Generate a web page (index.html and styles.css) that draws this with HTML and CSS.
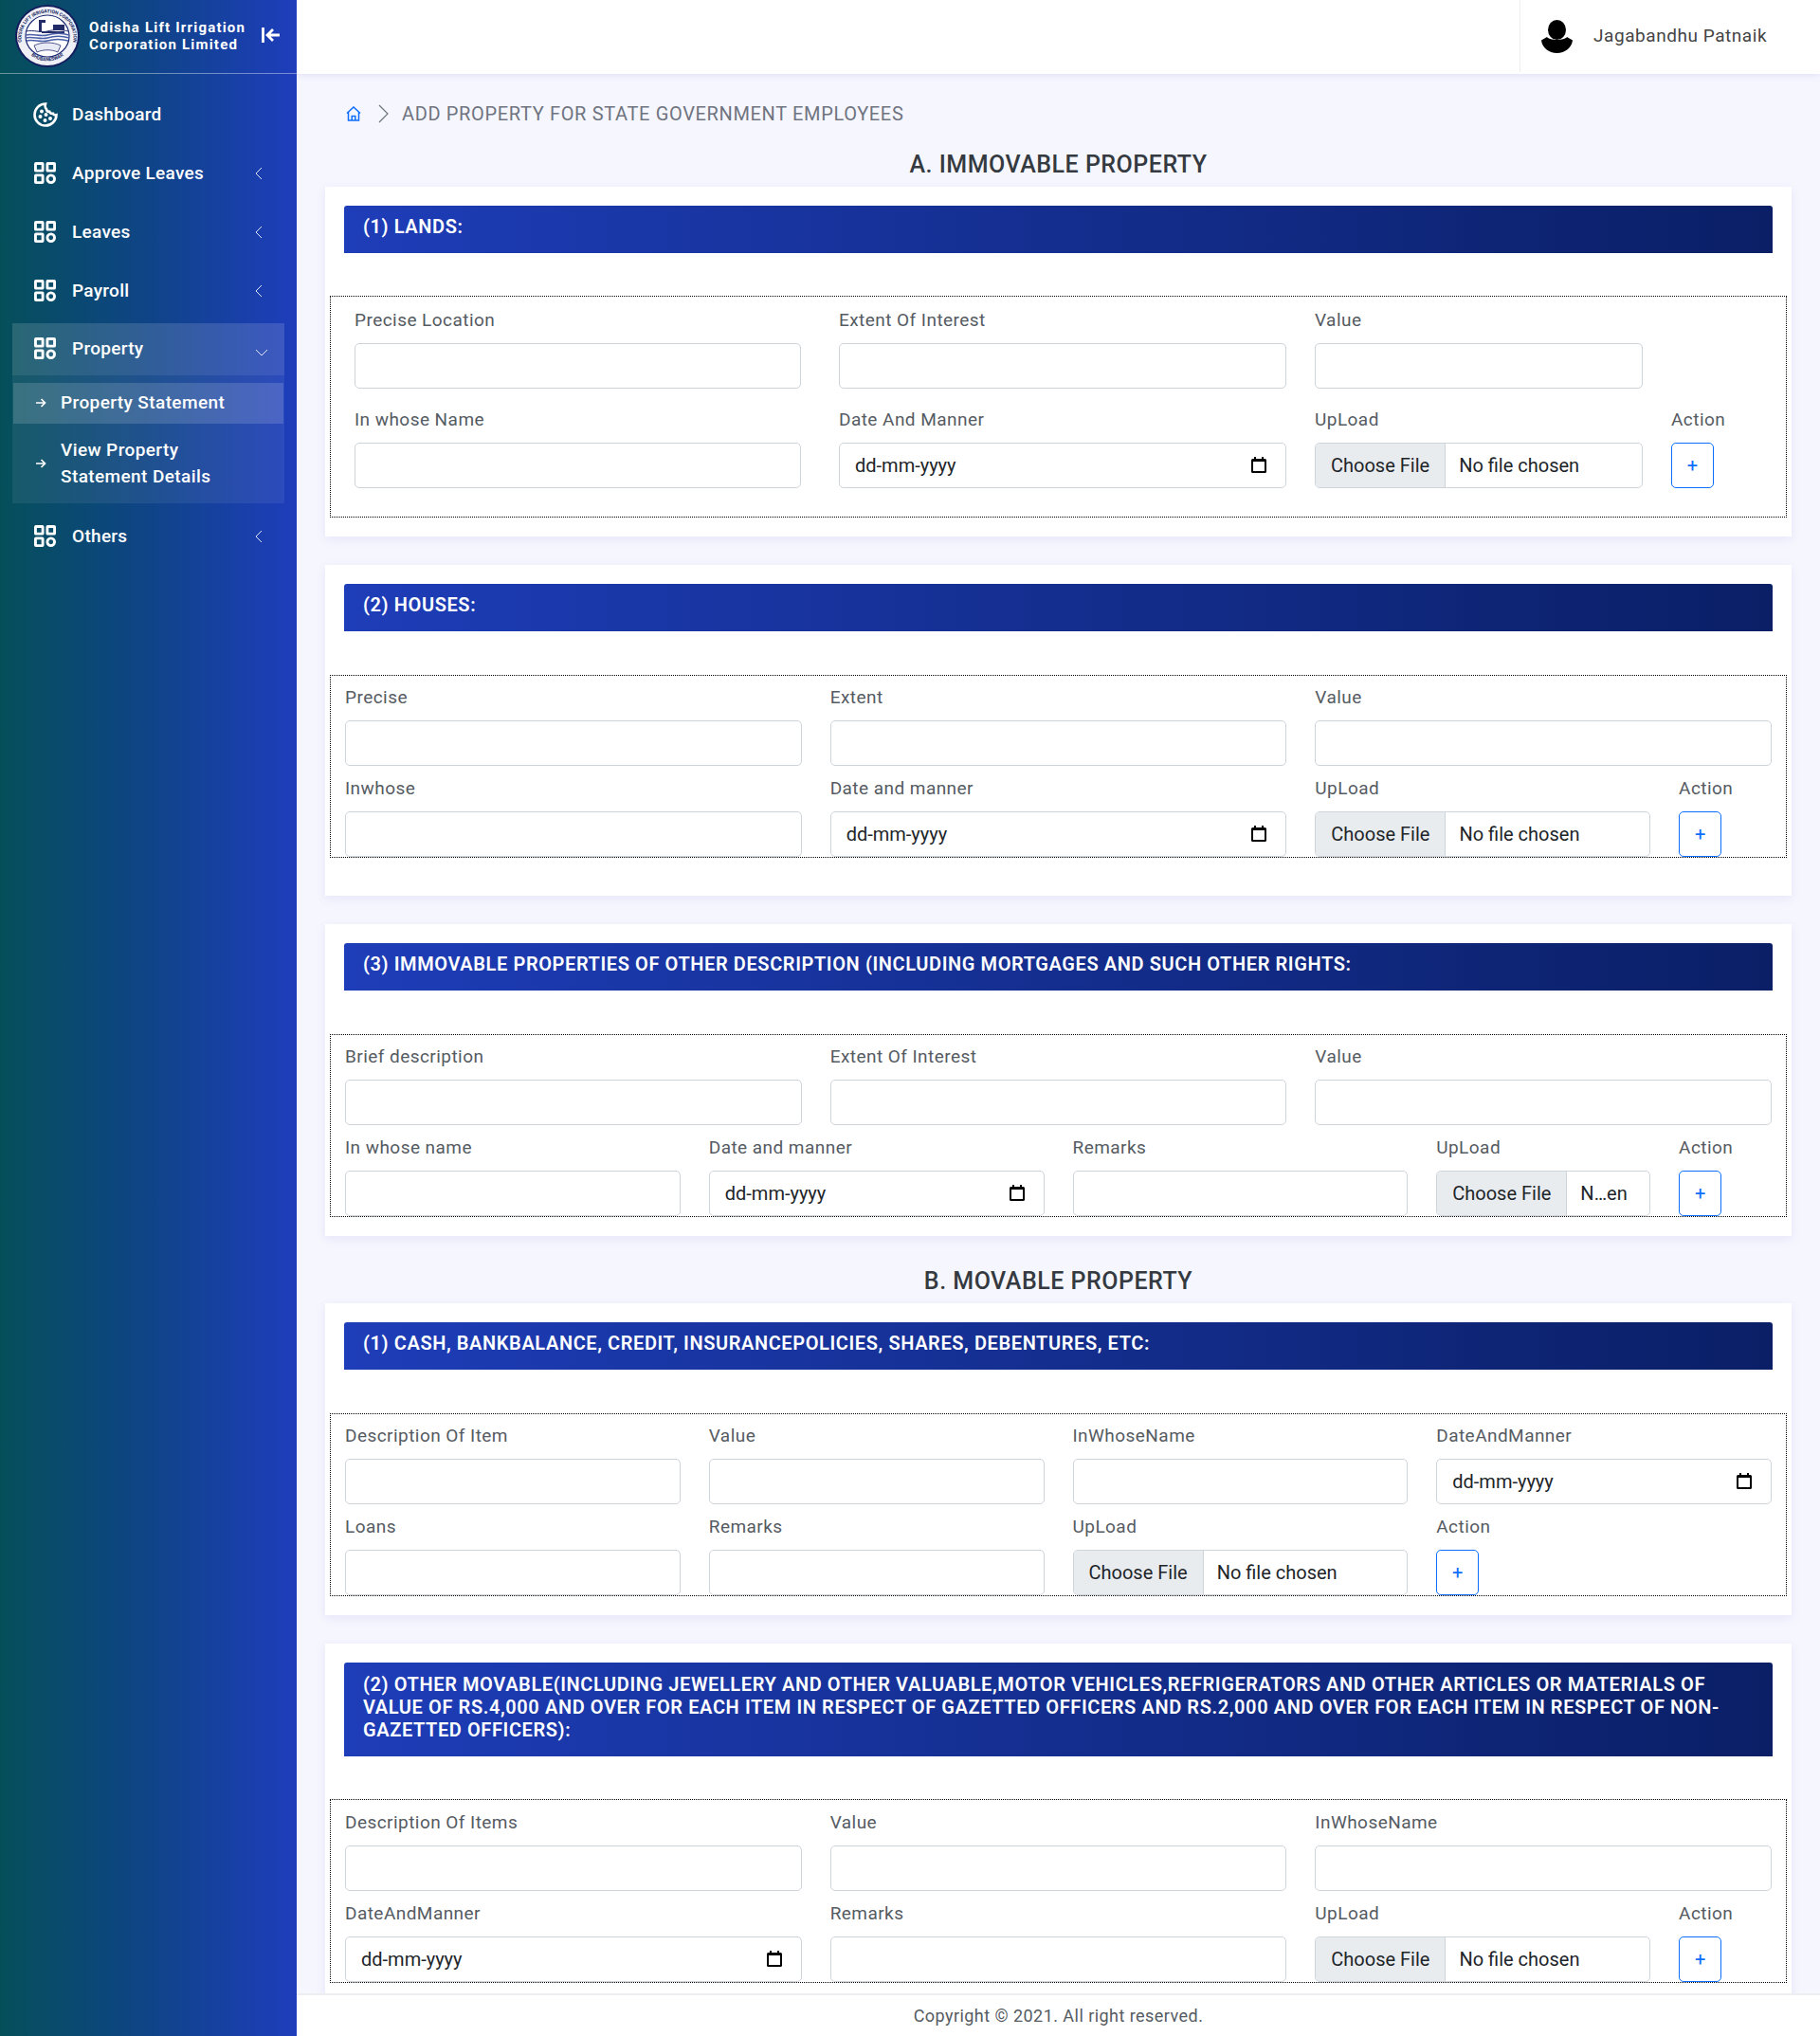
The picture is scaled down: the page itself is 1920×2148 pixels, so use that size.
FILE: index.html
```html
<!DOCTYPE html>
<html lang="en">
<head>
    <meta charset="UTF-8">
    <meta name="viewport" content="width=device-width, initial-scale=1.0">
    <title>Add Property</title>
    <link rel="stylesheet" href="styles.css">
</head>
<body>
    <svg class="sprite" aria-hidden="true">
        <symbol id="i-grid" viewBox="0 0 24 24">
            <g fill="none" stroke="currentColor" stroke-width="3">
                <rect x="1.500" y="1.500" width="8" height="8" rx=".5"/>
                <rect x="14.500" y="1.500" width="8" height="8" rx=".5"/>
                <rect x="1.500" y="14.500" width="8" height="8" rx=".5"/>
                <circle cx="18.500" cy="18.500" r="4"/>
            </g>
        </symbol>
        <symbol id="i-left" viewBox="0 0 8 14">
            <path d="M7 1 1 7l6 6" fill="none" stroke="currentColor" stroke-width="1"/>
        </symbol>
        <symbol id="i-arrow" viewBox="0 0 12 12">
            <path d="M1 6h9.500M6.500 2l4 4-4 4" fill="none" stroke="currentColor" stroke-width="1.700"/>
        </symbol>
        <symbol id="i-calendar" viewBox="0 0 16 17">
            <path fill-rule="evenodd" d="M3 0h2v2h6V0h2v2h1.500A1.500 1.500 0 0 1 16 3.500v12a1.500 1.500 0 0 1-1.500 1.500h-13A1.500 1.500 0 0 1 0 15.500v-12A1.500 1.500 0 0 1 1.500 2H3zM2 5v10h12V5z"/>
        </symbol>
    </svg>

    <div class="app">
        <aside class="sidebar">
            <div class="brand">
                <svg class="brand__logo" viewBox="0 0 68 66">
                    <ellipse cx="34" cy="33" rx="34" ry="33" fill="#141d5e"/>
                    <ellipse cx="34" cy="33" rx="32" ry="31" fill="#eef0f6"/>
                    <defs>
                        <path id="seal-top" d="M9.500 47A27.500 26.500 0 1 1 58.500 47"/>
                        <path id="seal-bottom" d="M11 47A27 26 0 0 0 57 47"/>
                    </defs>
                    <text class="brand__seal-text"><textPath href="#seal-top" startOffset="50%" text-anchor="middle">ODISHA LIFT IRRIGATION CORPORATION</textPath></text>
                    <text class="brand__seal-text"><textPath href="#seal-bottom" startOffset="50%" text-anchor="middle">BHUBANESWAR</textPath></text>
                    <ellipse cx="34" cy="33" rx="23" ry="22" fill="#fff" stroke="#1c2a74" stroke-width="1.200"/>
                    <path d="M25 29V16h7v3h-4v10zM40 21h12v6H40zM28 28h24v2H28z" fill="#232c66"/>
                    <path d="M12 28c7-2 15 2 22 0s15-2 22 0" fill="none" stroke="#26306f" stroke-width="1"/>
                    <path d="M11 32c7-2 16 2 23 0s16-2 23 0M11 35c7-2 16 2 23 0s16-2 23 0M12 38c7-2 15 2 22 0s15-2 22 0" fill="none" stroke="#4a5fa8" stroke-width="1.500"/>
                    <path d="M20 43c8-4 20-4 28 0l-3 7c-7-3-15-3-22 0z" fill="#e8ebf5" stroke="#26306f" stroke-width=".8"/>
                </svg>
                <div class="brand__name">Odisha Lift Irrigation Corporation Limited</div>
                <svg class="brand__toggle" viewBox="0 0 20 16">
                    <path d="M1.500 0v16M19 8H6M12 2 6 8l6 6" fill="none" stroke="currentColor" stroke-width="2.800"/>
                </svg>
            </div>

            <ul class="nav">
                <li class="nav__item">
                    <div class="nav__link">
                        <svg class="nav__icon nav__icon--cookie" viewBox="0 0 26 26">
                            <path d="M13 1.500a11.500 11.500 0 1 0 11.500 11.700c-1.600.5-3 0-3.600-1.400-1.700.4-3.200-.5-3.700-2.100-1.800.2-3.100-1-3.300-2.700C12.900 6.700 12.200 3.800 13 1.500z" fill="none" stroke="currentColor" stroke-width="2.600"/>
                            <circle cx="9" cy="9.500" r="2" fill="currentColor"/>
                            <circle cx="7.500" cy="15" r="2" fill="currentColor"/>
                            <circle cx="13.500" cy="13" r="2" fill="currentColor"/>
                            <circle cx="12.500" cy="19" r="2" fill="currentColor"/>
                            <circle cx="18" cy="17" r="2" fill="currentColor"/>
                        </svg>
                        <span>Dashboard</span>
                    </div>
                </li>
                <li class="nav__item">
                    <div class="nav__link">
                        <svg class="nav__icon"><use href="#i-grid"/></svg>
                        <span>Approve Leaves</span>
                        <svg class="nav__caret"><use href="#i-left"/></svg>
                    </div>
                </li>
                <li class="nav__item">
                    <div class="nav__link">
                        <svg class="nav__icon"><use href="#i-grid"/></svg>
                        <span>Leaves</span>
                        <svg class="nav__caret"><use href="#i-left"/></svg>
                    </div>
                </li>
                <li class="nav__item">
                    <div class="nav__link">
                        <svg class="nav__icon"><use href="#i-grid"/></svg>
                        <span>Payroll</span>
                        <svg class="nav__caret"><use href="#i-left"/></svg>
                    </div>
                </li>
                <li class="nav__item">
                    <div class="nav__link nav__link--open">
                        <svg class="nav__icon"><use href="#i-grid"/></svg>
                        <span>Property</span>
                        <svg class="nav__caret-down" viewBox="0 0 14 8"><path d="M1 1l6 6 6-6" fill="none" stroke="currentColor" stroke-width="1"/></svg>
                    </div>
                    <ul class="subnav">
                        <li class="subnav__link subnav__link--active">
                            <svg class="subnav__arrow"><use href="#i-arrow"/></svg>
                            <span>Property Statement</span>
                        </li>
                        <li class="subnav__link">
                            <svg class="subnav__arrow"><use href="#i-arrow"/></svg>
                            <span>View Property<br>Statement Details</span>
                        </li>
                    </ul>
                </li>
                <li class="nav__item">
                    <div class="nav__link">
                        <svg class="nav__icon"><use href="#i-grid"/></svg>
                        <span>Others</span>
                        <svg class="nav__caret"><use href="#i-left"/></svg>
                    </div>
                </li>
            </ul>
        </aside>

        <div class="content">
            <header class="topbar">
                <div class="topbar__user">
                    <svg class="topbar__avatar" viewBox="0 0 33 35">
                        <ellipse cx="16.500" cy="10.500" rx="9.500" ry="10.500"/>
                        <path d="M6 18c2.500 4 18.500 4 21 0l6 3.500c-1 8-8 13.500-16.500 13.500S1 29.500 0 21.500z"/>
                    </svg>
                    <span class="topbar__name">Jagabandhu Patnaik</span>
                </div>
            </header>

            <main class="main">
                <div class="crumbs">
                    <svg class="crumbs__home" viewBox="0 0 16 16">
                        <path d="M1 7.500 8 1l7 6.500M2.500 6.500V15h11V6.500M6.200 15v-4.500h3.600V15" fill="none" stroke="currentColor" stroke-width="1.500"/>
                    </svg>
                    <svg class="crumbs__sep" viewBox="0 0 11 20">
                        <path d="M1 1l9 9-9 9" fill="none" stroke="currentColor" stroke-width="1.200"/>
                    </svg>
                    <span>ADD PROPERTY FOR STATE GOVERNMENT EMPLOYEES</span>
                </div>

                <h2 class="section-title section-title--first">A. IMMOVABLE PROPERTY</h2>

                <section class="card">
                    <h3 class="card__title">(1) LANDS:</h3>
                    <fieldset class="box box--lands">
                        <div class="form-row form-row--lands">
                            <div class="field"><label>Precise Location</label><input type="text"></div>
                            <div class="field"><label>Extent Of Interest</label><input type="text"></div>
                            <div class="field"><label>Value</label><input type="text"></div>
                            <div></div>
                            <div class="field"><label>In whose Name</label><input type="text"></div>
                            <div class="field"><label>Date And Manner</label><div class="date-input"><input type="text" value="dd-mm-yyyy"><svg><use href="#i-calendar"/></svg></div></div>
                            <div class="field"><label>UpLoad</label><input type="file"></div>
                            <div class="field"><label>Action</label><button class="add-btn">+</button></div>
                        </div>
                    </fieldset>
                </section>

                <section class="card card--loose">
                    <h3 class="card__title">(2) HOUSES:</h3>
                    <fieldset class="box">
                        <div class="form-row">
                            <div class="field col-4"><label>Precise</label><input type="text"></div>
                            <div class="field col-4"><label>Extent</label><input type="text"></div>
                            <div class="field col-4"><label>Value</label><input type="text"></div>
                            <div class="field col-4"><label>Inwhose</label><input type="text"></div>
                            <div class="field col-4"><label>Date and manner</label><div class="date-input"><input type="text" value="dd-mm-yyyy"><svg><use href="#i-calendar"/></svg></div></div>
                            <div class="field col-3"><label>UpLoad</label><input type="file"></div>
                            <div class="field col-1"><label>Action</label><button class="add-btn">+</button></div>
                        </div>
                    </fieldset>
                </section>

                <section class="card">
                    <h3 class="card__title">(3) IMMOVABLE PROPERTIES OF OTHER DESCRIPTION (INCLUDING MORTGAGES AND SUCH OTHER RIGHTS:</h3>
                    <fieldset class="box">
                        <div class="form-row">
                            <div class="field col-4"><label>Brief description</label><input type="text"></div>
                            <div class="field col-4"><label>Extent Of Interest</label><input type="text"></div>
                            <div class="field col-4"><label>Value</label><input type="text"></div>
                            <div class="field col-3"><label>In whose name</label><input type="text"></div>
                            <div class="field col-3"><label>Date and manner</label><div class="date-input"><input type="text" value="dd-mm-yyyy"><svg><use href="#i-calendar"/></svg></div></div>
                            <div class="field col-3"><label>Remarks</label><input type="text"></div>
                            <div class="field col-2"><label>UpLoad</label><input type="file"></div>
                            <div class="field col-1"><label>Action</label><button class="add-btn">+</button></div>
                        </div>
                    </fieldset>
                </section>

                <h2 class="section-title">B. MOVABLE PROPERTY</h2>

                <section class="card">
                    <h3 class="card__title">(1) CASH, BANKBALANCE, CREDIT, INSURANCEPOLICIES, SHARES, DEBENTURES, ETC:</h3>
                    <fieldset class="box">
                        <div class="form-row">
                            <div class="field col-3"><label>Description Of Item</label><input type="text"></div>
                            <div class="field col-3"><label>Value</label><input type="text"></div>
                            <div class="field col-3"><label>InWhoseName</label><input type="text"></div>
                            <div class="field col-3"><label>DateAndManner</label><div class="date-input"><input type="text" value="dd-mm-yyyy"><svg><use href="#i-calendar"/></svg></div></div>
                            <div class="field col-3"><label>Loans</label><input type="text"></div>
                            <div class="field col-3"><label>Remarks</label><input type="text"></div>
                            <div class="field col-3"><label>UpLoad</label><input type="file"></div>
                            <div class="field col-3"><label>Action</label><button class="add-btn">+</button></div>
                        </div>
                    </fieldset>
                </section>

                <section class="card">
                    <h3 class="card__title">(2) OTHER MOVABLE(INCLUDING JEWELLERY AND OTHER VALUABLE,MOTOR VEHICLES,REFRIGERATORS AND OTHER ARTICLES OR MATERIALS OF VALUE OF RS.4,000 AND OVER FOR EACH ITEM IN RESPECT OF GAZETTED OFFICERS AND RS.2,000 AND OVER FOR EACH ITEM IN RESPECT OF NON-GAZETTED OFFICERS):</h3>
                    <fieldset class="box">
                        <div class="form-row">
                            <div class="field col-4"><label>Description Of Items</label><input type="text"></div>
                            <div class="field col-4"><label>Value</label><input type="text"></div>
                            <div class="field col-4"><label>InWhoseName</label><input type="text"></div>
                            <div class="field col-4"><label>DateAndManner</label><div class="date-input"><input type="text" value="dd-mm-yyyy"><svg><use href="#i-calendar"/></svg></div></div>
                            <div class="field col-4"><label>Remarks</label><input type="text"></div>
                            <div class="field col-3"><label>UpLoad</label><input type="file"></div>
                            <div class="field col-1"><label>Action</label><button class="add-btn">+</button></div>
                        </div>
                    </fieldset>
                </section>
            </main>

            <footer class="footer">Copyright © 2021. All right reserved.</footer>
        </div>
    </div>
</body>
</html>
```

FILE: styles.css
```css
* {
    box-sizing: border-box;
}

body {
    margin: 0;
    font-family: Roboto, "Liberation Sans", sans-serif;
    background: #f6f6fe;
    color: #212529;
}

ul {
    list-style: none;
    margin: 0;
    padding: 0;
}

.sprite {
    display: none;
}

.app {
    display: flex;
    height: 2148px;
}

/* sidebar */
.sidebar {
    width: 313px;
    flex: none;
    color: #fff;
    background: linear-gradient(90deg, #054f5a 0%, #0f4487 50%, #1e3dbc 100%);
}

.brand {
    height: 78px;
    display: flex;
    align-items: center;
    padding: 0 17px 2px 16px;
    border-bottom: 1px solid rgba(255, 255, 255, 0.4);
}

.brand__logo {
    width: 68px;
    height: 66px;
    flex: none;
}

.brand__seal-text {
    font-size: 5px;
    font-weight: 700;
    fill: #141d5e;
}

.brand__name {
    width: 176px;
    margin-left: 10px;
    font-size: 15px;
    font-weight: 700;
    line-height: 18px;
    letter-spacing: 1.2px;
}

.brand__toggle {
    width: 20px;
    height: 16px;
    margin: 0 0 2px auto;
}

.nav {
    padding: 15px 13px 0;
}

.nav__item {
    margin-bottom: 7px;
}

.nav__link {
    height: 55px;
    display: flex;
    align-items: center;
    padding-left: 23px;
    font-size: 19px;
    font-weight: 500;
    letter-spacing: 0.3px;
}

.nav__link--open {
    background: rgba(255, 255, 255, 0.14);
    padding-bottom: 2px;
}

.nav__icon {
    width: 23px;
    height: 23px;
    flex: none;
    margin: 0 17px 1px 0;
}

.nav__icon--cookie {
    width: 26px;
    height: 26px;
    margin: 0 15px 0 -1px;
}

.nav__caret {
    width: 8px;
    height: 14px;
    margin-left: auto;
    margin-right: 23px;
    color: #dfe4f7;
}

.nav__caret-down {
    width: 14px;
    height: 8px;
    margin: 8px 17px 0 auto;
    color: #dfe4f7;
}

.subnav {
    height: 135px;
    padding: 8px 1px 0;
    background: rgba(255, 255, 255, 0.07);
}

.subnav__link {
    display: flex;
    align-items: center;
    padding: 14px 10px 14px 23px;
    font-size: 19px;
    font-weight: 500;
    line-height: 28px;
    letter-spacing: 0.4px;
}

.subnav__link--active {
    height: 43px;
    padding-top: 0;
    padding-bottom: 2px;
    background: rgba(255, 255, 255, 0.15);
}

.subnav__arrow {
    width: 12px;
    height: 12px;
    flex: none;
    margin-right: 15px;
}

/* right side */
.content {
    flex: 1;
    min-width: 0;
    display: flex;
    flex-direction: column;
}

.topbar {
    height: 78px;
    flex: none;
    display: flex;
    justify-content: flex-end;
    padding-bottom: 2px;
    background: #fff;
    box-shadow: 0 2px 6px rgba(90, 90, 220, 0.12);
    position: relative;
}

.topbar__user {
    width: 317px;
    display: flex;
    align-items: center;
    padding-left: 22px;
    border-left: 1px solid #eee;
    font-size: 19px;
    letter-spacing: 0.55px;
    color: #444;
}

.topbar__avatar {
    width: 33px;
    height: 35px;
    margin-right: 22px;
    fill: #000;
}

.topbar__name {
    margin-bottom: 2px;
}

.main {
    flex: 1;
    min-height: 0;
    overflow: hidden;
    padding: 30px 30px 0;
}

.crumbs {
    height: 24px;
    display: flex;
    align-items: center;
    padding-left: 22px;
    font-size: 20px;
    letter-spacing: 0.65px;
    color: #6f7480;
}

.crumbs__home {
    width: 16px;
    height: 16px;
    color: #0d6efd;
}

.crumbs__sep {
    width: 11px;
    height: 20px;
    margin: 0 14px 0 18px;
    color: #6c757d;
}

.section-title {
    height: 33px;
    margin: 0 0 7.5px;
    padding-top: 3px;
    text-align: center;
    font-size: 25px;
    font-weight: 500;
    line-height: 30px;
    letter-spacing: 0.5px;
    color: #343a40;
}

.section-title--first {
    height: 30px;
    margin: 27px 0 7.7px;
    padding-top: 0;
}

.card {
    margin-bottom: 30px;
    padding: 20px;
    background: #fff;
    box-shadow: 0 3px 10px rgba(90, 90, 220, 0.1);
}

.card--loose {
    padding-bottom: 39.5px;
}

.card__title {
    margin: 0 0 45.4px;
    padding: 10.6px 20px 16px;
    border-radius: 3px 3px 0 0;
    background: linear-gradient(90deg, #1e3db8 0%, #0a1f66 100%);
    color: #fff;
    font-size: 20px;
    font-weight: 600;
    line-height: 24px;
    letter-spacing: 0.6px;
}

.box {
    min-width: 0;
    margin: 0 -15px;
    padding: 11.5px 15px 0;
    border: 1px dotted #000;
}

.box--lands {
    margin-top: -0.4px;
    padding: 13px 0 29.4px 25px;
}

.form-row {
    display: grid;
    grid-template-columns: repeat(12, minmax(0, 1fr));
    column-gap: 30px;
    row-gap: 12px;
}

.form-row--lands {
    grid-template-columns: 511px 502px 376px 100px;
    column-gap: 0;
    row-gap: 21px;
}

.form-row--lands .field {
    padding-right: 30px;
}

.form-row--lands .field:nth-child(4n+1) {
    padding-right: 40px;
}

.form-row--lands .field:last-child {
    padding-right: 0;
}

.col-1 {
    grid-column: span 1;
}

.col-2 {
    grid-column: span 2;
}

.col-3 {
    grid-column: span 3;
}

.col-4 {
    grid-column: span 4;
}

.field label {
    display: block;
    height: 24px;
    margin-bottom: 12px;
    font-size: 19px;
    line-height: 24px;
    letter-spacing: 0.45px;
    color: #555b62;
    white-space: nowrap;
}

.field input {
    display: block;
    width: 100%;
    height: 48px;
    padding: 8px 16px;
    border: 1px solid #ced4da;
    border-radius: 5px;
    background: #fff;
    font-family: inherit;
    font-size: 20px;
    color: #212529;
}

.field input[type="file"] {
    padding: 0 16px 0 0;
    line-height: 46px;
    overflow: hidden;
}

.field input[type="file"]::file-selector-button {
    height: 46px;
    margin: 0 14px 0 0;
    padding: 0 16px;
    border: 0;
    border-right: 1px solid #ced4da;
    background: #e9ecef;
    font-family: inherit;
    font-size: 20px;
    color: #212529;
}

.date-input {
    position: relative;
}

.date-input svg {
    position: absolute;
    top: 15px;
    right: 21px;
    width: 16px;
    height: 17px;
    fill: #000;
}

.add-btn {
    display: block;
    width: 45px;
    height: 48px;
    padding: 0;
    border: 1px solid #0d6efd;
    border-radius: 5px;
    background: #fff;
    font-family: inherit;
    font-size: 20px;
    color: #0d6efd;
}

.footer {
    height: 45px;
    flex: none;
    border-top: 2px solid #eceef2;
    background: #fff;
    text-align: center;
    font-size: 18px;
    line-height: 43px;
    letter-spacing: 0.45px;
    color: #555b62;
    position: relative;
}
```
